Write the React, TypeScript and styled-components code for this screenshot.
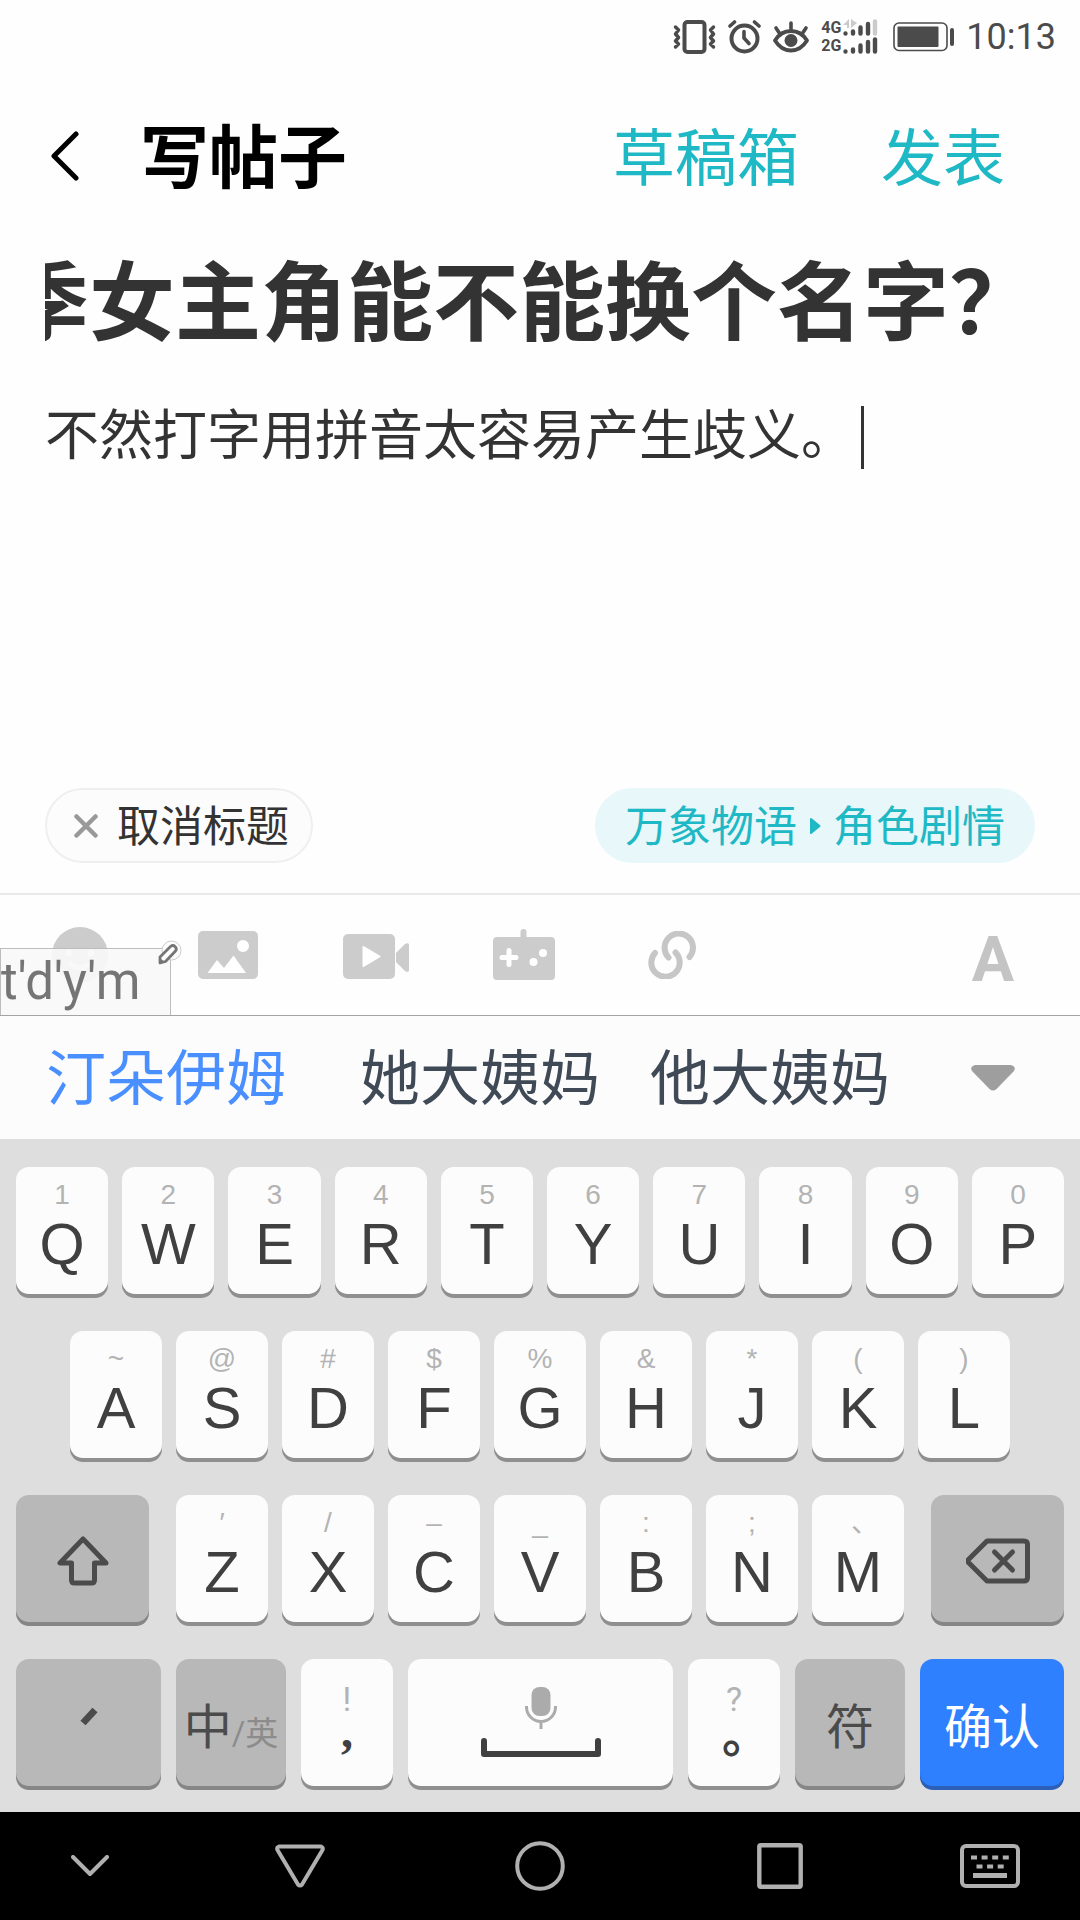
import React, { useEffect, useRef, useState } from "react";
import styled, { createGlobalStyle } from "styled-components";

const cjk = `Roboto, "Noto Sans CJK SC", sans-serif`;
const latin = `"Liberation Sans", "Noto Sans CJK SC", sans-serif`;

const GlobalStyle = createGlobalStyle`
  * { box-sizing: border-box; }
  body { margin: 0; background: #fefefe; font-family: ${cjk}; }
  button, input, textarea { font: inherit; color: inherit; margin: 0; padding: 0; border: 0; background: none; }
  svg { display: block; }
`;

const Page = styled.div`
  min-height: 100vh;
  display: flex;
  flex-direction: column;
`;

const StatusBar = styled.div`
  display: flex;
  justify-content: flex-end;
  align-items: center;
  gap: 12px;
  height: 73px;
  padding-right: 24px;
  color: #4b4b4b;
`;

const Clock = styled.time`
  font-size: 36px;
  line-height: 40px;
`;

const Signal = styled.div`
  display: grid;
  grid-template-columns: auto auto;
  column-gap: 1px;
  font: bold 16px/18px Roboto, sans-serif;
`;

const Header = styled.header`
  display: flex;
  align-items: center;
  height: 166px;
  padding: 0 75px 0 40px;
`;

const BackButton = styled.button`
  width: 100px;
  padding-left: 10px;
`;

const PageTitle = styled.h1`
  margin: 0;
  padding-top: 8px;
  flex: 1;
  font-size: 69px;
  line-height: 80px;
  font-weight: 700;
  color: #000;
`;

const HeaderActions = styled.div`
  display: flex;
  gap: 82px;
  padding-top: 8px;
`;

const HeaderButton = styled.button`
  font-size: 62px;
  line-height: 80px;
  color: #1fb8c5;
  white-space: nowrap;
`;

const Editor = styled.main`
  flex: 1;
  display: flex;
  flex-direction: column;
  padding: 7px 45px 0;
  color: #333;
`;

const TitleInput = styled.input`
  width: 100%;
  height: 100px;
  font-size: 86px;
  font-weight: 700;
  outline: none;
`;

const BodyLine = styled.div`
  display: flex;
  align-items: center;
  gap: 6px;
  margin-top: 51px;
`;

const BodyInput = styled.textarea`
  field-sizing: content;
  max-width: 100%;
  height: 80px;
  font-size: 54px;
  line-height: 80px;
  resize: none;
  outline: none;
  overflow: hidden;
`;

const Caret = styled.span`
  width: 3px;
  height: 63px;
  background: #333;
`;

const Tags = styled.div`
  display: flex;
  justify-content: space-between;
  padding: 0 45px 30px;
  font-size: 43px;
`;

const Pill = styled.button<{ $accent?: boolean }>`
  display: flex;
  align-items: center;
  gap: ${(p) => (p.$accent ? "12px" : "19px")};
  height: 75px;
  padding: 0 ${(p) => (p.$accent ? "28px" : "22px")} 0 ${(p) => (p.$accent ? "28px" : "27px")};
  border-radius: 38px;
  border: 2px solid ${(p) => (p.$accent ? "#e8f7fa" : "#efefef")};
  background: ${(p) => (p.$accent ? "#e8f7fa" : "#fcfcfc")};
  color: ${(p) => (p.$accent ? "#1fb8c5" : "#333")};
  white-space: nowrap;
`;

const PillText = styled.span`
  padding-bottom: 5px;
`;

const Toolbar = styled.div`
  position: relative;
  display: flex;
  align-items: center;
  height: 122px;
  padding-left: 6px;
  border-top: 2px solid #eaeaea;
  color: #ccc;
`;

const Tool = styled.button`
  display: flex;
  justify-content: center;
  width: 148px;
`;

const FontTool = styled.button`
  margin-left: auto;
  width: 174px;
  padding-top: 10px;
  font-size: 63px;
  line-height: 72px;
  font-weight: 700;
  color: #c4c4c4;
`;

const Composing = styled.div`
  position: absolute;
  left: 0;
  bottom: 0;
  width: 171px;
  height: 67px;
  border: 1px solid #bdbdbd;
  border-bottom: 0;
  background: rgba(248, 248, 248, 0.92);
  color: #757575;
  font-size: 51px;
  line-height: 66px;
`;

const PencilBadge = styled.svg`
  position: absolute;
  right: -12px;
  top: -10px;
`;

const Candidates = styled.div`
  display: flex;
  height: 124px;
  border-top: 1px solid #a3a3a3;
  background: #fcfcfc;
`;

const Candidate = styled.button<{ $first?: boolean }>`
  padding: ${(p) => (p.$first ? "5px 49px 0 46px" : "5px 25px 0")};
  font-size: 60px;
  line-height: 80px;
  color: ${(p) => (p.$first ? "#4a8fff" : "#404a56")};
  white-space: nowrap;
`;

const MoreButton = styled.button`
  display: flex;
  align-items: center;
  justify-content: center;
  margin-left: auto;
  width: 164px;
  padding-right: 10px;
`;

const Keyboard = styled.div`
  display: flex;
  flex-direction: column;
  gap: 37px;
  padding: 28px 0 26px;
  background: #dedede;
`;

const KeyRow = styled.div<{ $side?: number; $gap?: number }>`
  display: flex;
  gap: ${(p) => p.$gap ?? 14}px;
  padding: 0 ${(p) => p.$side ?? 16}px;
`;

const LetterGroup = styled.div`
  flex: 728 1 0;
  display: flex;
  gap: 14px;
  margin: 0 13px;
`;

const tones = {
  light: ["#fcfcfc", "#8f8f8f", "#404040"],
  dark: ["#b8b8b8", "#868686", "#4b4b4b"],
  blue: ["#2f80ff", "#2c60b8", "#fff"],
};

const Key = styled.button<{ $grow?: number; $tone?: keyof typeof tones }>`
  flex: ${(p) => p.$grow ?? 92} 1 0;
  min-width: 0;
  height: 127px;
  display: flex;
  align-items: center;
  justify-content: center;
  border-radius: 13px;
  background: ${(p) => tones[p.$tone ?? "light"][0]};
  box-shadow: 0 4px 0 ${(p) => tones[p.$tone ?? "light"][1]};
  color: ${(p) => tones[p.$tone ?? "light"][2]};
  font-size: 48px;
  white-space: nowrap;
`;

const StackedKey = styled(Key)`
  flex-direction: column;
  justify-content: flex-start;
  padding-top: 12px;
  font-family: ${latin};
`;

const Hint = styled.span`
  height: 32px;
  font-size: 28px;
  line-height: 32px;
  color: #b3b3b3;
  font-feature-settings: "halt";
`;

const Letter = styled.span`
  font-size: 58px;
  line-height: 66px;
`;

const PunctuationKey = styled(Key)`
  flex-direction: column;
  justify-content: flex-start;
  padding-top: 20px;
`;

const PunctuationHint = styled.span`
  font-size: 34px;
  line-height: 40px;
  color: #b3b3b3;
`;

const Punctuation = styled.span<{ $serif?: boolean }>`
  font-family: ${(p) => (p.$serif ? `"Liberation Serif", serif` : `"Noto Sans CJK SC", sans-serif`)};
  font-size: 48px;
  font-weight: 700;
  line-height: 24px;
  font-feature-settings: "halt";
`;

const SpaceKey = styled(Key)`
  flex-direction: column;
  justify-content: flex-start;
  gap: 9px;
  padding-top: 28px;
`;

const OtherLanguage = styled.small`
  font-size: 33px;
  padding-top: 16px;
  color: #8c8c8c;
`;

const NavBar = styled.nav`
  display: flex;
  height: 108px;
  background: #000;
  color: #b0b0b0;
`;

const NavButton = styled.button<{ $grow: number }>`
  flex: ${(p) => p.$grow} 1 0;
  display: flex;
  align-items: center;
  justify-content: center;
`;

const rowOne = ["Q1", "W2", "E3", "R4", "T5", "Y6", "U7", "I8", "O9", "P0"];
const rowTwo = ["A~", "S@", "D#", "F$", "G%", "H&", "J*", "K(", "L)"];
const rowThree = ["Z′", "X/", "C–", "V_", "B:", "N;", "M、"];

const LetterKeys = ({ keys }: { keys: string[] }) => (
  <>
    {keys.map(([letter, hint]) => (
      <StackedKey key={letter}>
        <Hint>{hint}</Hint>
        <Letter>{letter}</Letter>
      </StackedKey>
    ))}
  </>
);

const SignalBars = ({ weak }: { weak?: boolean }) => (
  <svg width="39" height="18" viewBox="0 0 39 18" stroke="currentColor" strokeWidth="4.4" strokeLinecap="round">
    <path d="M3.500 14.400v.1M11 12.400v2.100M18.500 8.500v6M26 5v9.500" />
    <path d="M33 2.400v12.100" stroke={weak ? "#cbcbcb" : "currentColor"} />
    {weak && <path d="M1 6l6-6v9H5V6zM9 0v9l6-5z" fill="#cbcbcb" stroke="none" />}
  </svg>
);

export default function App() {
  const [title, setTitle] = useState("季女主角能不能换个名字？");
  const [body, setBody] = useState("不然打字用拼音太容易产生歧义。");
  const titleRef = useRef<HTMLInputElement>(null);

  useEffect(() => {
    const input = titleRef.current;
    if (input) input.scrollLeft = input.scrollWidth;
  }, [title]);

  return (
    <Page>
      <GlobalStyle />
      <StatusBar>
        <svg width="43" height="34" viewBox="0 0 43 34" fill="none" stroke="currentColor" strokeLinecap="round" strokeLinejoin="round">
          <rect x="11.500" y="2" width="20" height="30" rx="3" strokeWidth="4" />
          <path d="M2.500 7l3 3-3 4 3 3.500-3 3.500 3 3-3 3M40.500 7l-3 3 3 4-3 3.500 3 3.500-3 3 3 3" strokeWidth="3.500" />
        </svg>
        <svg width="33" height="34" viewBox="0 0 33 34" fill="none" stroke="currentColor" strokeLinecap="round">
          <circle cx="16.500" cy="18.500" r="13" strokeWidth="4" />
          <path d="M16 11.500v6.500l5 5.500" strokeWidth="3.600" />
          <path d="M2 6l4.500-4M31 6l-4.500-4" strokeWidth="3.600" />
        </svg>
        <svg width="36" height="34" viewBox="0 0 36 34" fill="none" stroke="currentColor" strokeLinecap="round" strokeLinejoin="round">
          <path d="M2 20.500C6 14 11.500 11 18 11s12 3 16 9.500C30 27 24.500 30.500 18 30.500S6 27 2 20.500z" strokeWidth="3.800" />
          <circle cx="18" cy="20.500" r="6.500" fill="currentColor" stroke="none" />
          <path d="M18 3v6M3 8l4 6M33 8l-4 6" strokeWidth="3.600" />
        </svg>
        <Signal>
          <span>4G</span>
          <SignalBars weak />
          <span>2G</span>
          <SignalBars />
        </Signal>
        <svg width="61" height="30" viewBox="0 0 61 30">
          <rect x="1" y="1" width="53" height="27.500" rx="5" fill="none" stroke="currentColor" strokeWidth="1.600" />
          <rect x="4.500" y="4.500" width="41" height="20.500" rx="1" fill="currentColor" />
          <rect x="57" y="6" width="4" height="18" rx="2" fill="currentColor" />
        </svg>
        <Clock>10:13</Clock>
      </StatusBar>

      <Header>
        <BackButton aria-label="返回">
          <svg width="30" height="50" viewBox="0 0 30 50" fill="none" stroke="#000" strokeWidth="5" strokeLinecap="round" strokeLinejoin="round">
            <path d="M26 3L4 25l22 22" />
          </svg>
        </BackButton>
        <PageTitle>写帖子</PageTitle>
        <HeaderActions>
          <HeaderButton>草稿箱</HeaderButton>
          <HeaderButton>发表</HeaderButton>
        </HeaderActions>
      </Header>

      <Editor>
        <TitleInput ref={titleRef} aria-label="标题" value={title} onChange={(e) => setTitle(e.target.value)} />
        <BodyLine>
          <BodyInput aria-label="正文" rows={1} value={body} onChange={(e) => setBody(e.target.value)} />
          <Caret />
        </BodyLine>
      </Editor>

      <Tags>
        <Pill>
          <svg width="24" height="24" viewBox="0 0 24 24" stroke="#999" strokeWidth="4.500" strokeLinecap="round">
            <path d="M2.500 2.500l19 19M21.500 2.500l-19 19" />
          </svg>
          <PillText>取消标题</PillText>
        </Pill>
        <Pill $accent>
          <PillText>万象物语</PillText>
          <svg width="12" height="18" viewBox="0 0 12 18">
            <path d="M2 2l8.500 7L2 16z" fill="currentColor" stroke="currentColor" strokeWidth="2" strokeLinejoin="round" />
          </svg>
          <PillText>角色剧情</PillText>
        </Pill>
      </Tags>

      <Toolbar>
        <Tool aria-label="表情">
          <svg width="56" height="56" viewBox="0 0 56 56">
            <circle cx="28" cy="28" r="28" fill="currentColor" />
            <circle cx="17" cy="26" r="3.500" fill="#fff" />
            <circle cx="39" cy="26" r="3.500" fill="#fff" />
            <path d="M18 36c5 6 15 6 20 0" fill="none" stroke="#fff" strokeWidth="4" strokeLinecap="round" />
          </svg>
        </Tool>
        <Tool aria-label="图片">
          <svg width="60" height="48" viewBox="0 0 60 48">
            <rect width="60" height="48" rx="5" fill="currentColor" />
            <circle cx="45" cy="15" r="6" fill="#fff" />
            <path d="M9.500 42l9.500-13 7 8 9.500-12.500L48 42z" fill="#fff" />
          </svg>
        </Tool>
        <Tool aria-label="视频">
          <svg width="66" height="48" viewBox="0 0 66 48" fill="currentColor">
            <rect y="3" width="52" height="45" rx="5" />
            <path d="M53 22l9-9c2-1.500 4-1 4 1v25c0 2-2 2.500-4 1l-9-9z" />
            <path d="M20.500 16l16 9.500-16 9.500z" fill="#fff" stroke="#fff" strokeWidth="2" strokeLinejoin="round" />
          </svg>
        </Tool>
        <Tool aria-label="游戏">
          <svg width="62" height="52" viewBox="0 0 62 52">
            <rect x="27.500" y="0" width="6" height="14" rx="3" fill="currentColor" />
            <rect y="8" width="62" height="43" rx="4" fill="currentColor" />
            <path d="M16 21.500v14M9 28.500h14" stroke="#fff" strokeWidth="5" strokeLinecap="round" />
            <circle cx="40.500" cy="33" r="4" fill="#fff" />
            <circle cx="50" cy="24" r="4" fill="#fff" />
          </svg>
        </Tool>
        <Tool aria-label="链接">
          <svg width="48" height="48" viewBox="0 0 48 48" fill="none" stroke="#c6c6c6" strokeWidth="6" strokeLinecap="round">
            <path d="M20.500 26.500A14.200 14.200 0 1 1 41.500 26" />
            <path d="M27.500 21.500A14.200 14.200 0 1 1 7 22" />
          </svg>
        </Tool>
        <FontTool aria-label="字体">A</FontTool>
        <Composing>
          t'd'y'm
          <PencilBadge width="26" height="28" viewBox="0 0 26 28">
            <circle cx="15.500" cy="11.500" r="9.500" fill="#fcfcfc" stroke="#ccc" />
            <path d="M4 18L14.500 7.500q2.500-2 4.500 0 2.500 2.500.5 4.500L9.500 22.500 4 24z" fill="#fcfcfc" stroke="#757575" strokeWidth="2.800" strokeLinejoin="round" />
            <path d="M3.500 19l5.500 4-5.500 2z" fill="#757575" />
          </PencilBadge>
        </Composing>
      </Toolbar>

      <Candidates>
        <Candidate $first>汀朵伊姆</Candidate>
        <Candidate>她大姨妈</Candidate>
        <Candidate>他大姨妈</Candidate>
        <MoreButton aria-label="更多候选">
          <svg width="44" height="26" viewBox="0 0 44 26">
            <path d="M4 0h36q6 2 2.500 6.500L25.500 24q-3.500 3-7 0L1.500 6.500Q-2 2 4 0z" fill="#9e9e9e" />
          </svg>
        </MoreButton>
      </Candidates>

      <Keyboard>
        <KeyRow>
          <LetterKeys keys={rowOne} />
        </KeyRow>
        <KeyRow $side={70}>
          <LetterKeys keys={rowTwo} />
        </KeyRow>
        <KeyRow>
          <Key $grow={133} $tone="dark" aria-label="上档">
            <svg width="52" height="55" viewBox="0 -5 52 55" fill="none" stroke="currentColor" strokeWidth="5" strokeLinejoin="round">
              <path d="M26 3L3 27h11.500v17q0 3 3 3h17q3 0 3-3V27H49z" />
            </svg>
          </Key>
          <LetterGroup>
            <LetterKeys keys={rowThree} />
          </LetterGroup>
          <Key $grow={133} $tone="dark" aria-label="删除">
            <svg width="64" height="51" viewBox="0 -5 64 51" fill="none" stroke="currentColor" strokeWidth="5" strokeLinejoin="round" strokeLinecap="round">
              <path d="M21 3h37q3.500 0 3.500 3.500v33q0 3.500-3.500 3.500H21L2.500 24.500q-1-1.500 0-3z" />
              <path d="M28.500 14l18 18M46.500 14l-18 18" />
            </svg>
          </Key>
        </KeyRow>
        <KeyRow $gap={15}>
          <Key $grow={145} $tone="dark" aria-label="分词">
            <svg width="18" height="32" viewBox="0 0 18 32" stroke="currentColor" strokeWidth="7">
              <path d="M15 3L3 16" />
            </svg>
          </Key>
          <Key $grow={110} $tone="dark">
            中<OtherLanguage>/英</OtherLanguage>
          </Key>
          <PunctuationKey>
            <PunctuationHint>!</PunctuationHint>
            <Punctuation $serif>,</Punctuation>
          </PunctuationKey>
          <SpaceKey $grow={265} aria-label="空格">
            <svg width="32" height="42" viewBox="0 0 32 42" fill="none" stroke="#ababab" strokeWidth="3">
              <rect x="6.500" y="0" width="19" height="29" rx="8" fill="#ababab" stroke="none" />
              <path d="M1.500 19v1a14.500 14.500 0 0 0 29 0v-1M16 34v8" />
            </svg>
            <svg width="120" height="19" viewBox="0 0 120 19" fill="none" stroke="currentColor" strokeWidth="6" strokeLinecap="round" strokeLinejoin="round">
              <path d="M3 3v13h114V3" />
            </svg>
          </SpaceKey>
          <PunctuationKey>
            <PunctuationHint>?</PunctuationHint>
            <Punctuation>。</Punctuation>
          </PunctuationKey>
          <Key $grow={110} $tone="dark">符</Key>
          <Key $grow={144} $tone="blue">确认</Key>
        </KeyRow>
      </Keyboard>

      <NavBar>
        <NavButton $grow={180} aria-label="收起键盘">
          <svg width="38" height="22" viewBox="0 0 38 22" fill="none" stroke="currentColor" strokeWidth="4" strokeLinecap="round" strokeLinejoin="round">
            <path d="M2 2l17 17L36 2" />
          </svg>
        </NavButton>
        <NavButton $grow={240} aria-label="返回">
          <svg width="50" height="44" viewBox="0 0 50 44" fill="none" stroke="currentColor" strokeWidth="4" strokeLinejoin="round">
            <path d="M4 2.500h42q2.500 1 1.500 3.500L27 40.500q-2 2-4 0L2.500 6Q1.500 3.500 4 2.500z" />
          </svg>
        </NavButton>
        <NavButton $grow={240} aria-label="主页">
          <svg width="50" height="50" viewBox="0 0 50 50" fill="none" stroke="currentColor" strokeWidth="4">
            <circle cx="25" cy="25" r="22.800" />
          </svg>
        </NavButton>
        <NavButton $grow={240} aria-label="最近任务">
          <svg width="46" height="46" viewBox="0 0 46 46" fill="none" stroke="currentColor" strokeWidth="4.400">
            <rect x="2.300" y="2.300" width="41.400" height="41.400" rx="1.500" />
          </svg>
        </NavButton>
        <NavButton $grow={180} aria-label="切换输入法">
          <svg width="60" height="44" viewBox="0 0 60 44" fill="none" stroke="currentColor" strokeWidth="4">
            <rect x="2" y="2" width="56" height="40" rx="4" />
            <path d="M11 13.500h38" strokeDasharray="6 4.600" />
            <path d="M16.500 22.500h28" strokeDasharray="6 4.600" />
            <path d="M13 31.500h34" strokeWidth="5" />
          </svg>
        </NavButton>
      </NavBar>
    </Page>
  );
}
